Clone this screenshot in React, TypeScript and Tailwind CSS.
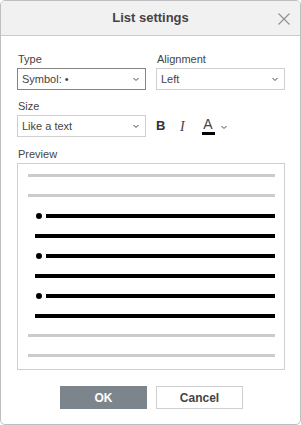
import { FC } from "react";

const Chevron: FC = () => (
  <svg width="6" height="5" viewBox="0 0 6 5" className="shrink-0">
    <path d="M0.5 1l2.5 2.5L5.5 1" fill="none" stroke="#444" strokeWidth="1" />
  </svg>
);

interface SelectProps {
  value: string;
  focused?: boolean;
}

const Select: FC<SelectProps> = ({ value, focused }) => (
  <div
    className={`flex h-[22px] items-center justify-between border bg-white pl-[4px] pr-[6px] text-[11px] text-[#444] ${
      focused ? "border-[#848484]" : "border-[#cfcfcf]"
    }`}
  >
    <span>{value}</span>
    <Chevron />
  </div>
);

const Label: FC<{ text: string }> = ({ text }) => (
  <div className="mb-[2px] h-[14px] pl-px text-[11px] leading-[14px] text-[#444]">
    {text}
  </div>
);

const GrayLine: FC = () => (
  <div className="h-[20px] pl-[10px] pr-[9px]">
    <div className="h-[3px] bg-[#cbcbcb]" />
  </div>
);

const TextLine: FC<{ bullet?: boolean }> = ({ bullet }) => (
  <div className="flex h-[20px] items-start pl-[17px] pr-[9px]">
    {bullet && (
      <div className="mr-[4px] ml-px mt-[-1px] h-[6px] w-[6px] shrink-0 rounded-full bg-black" />
    )}
    <div className="h-[4px] flex-1 bg-black" />
  </div>
);

export default function App() {
  return (
    <div
      className="flex h-[425px] w-[301px] flex-col overflow-hidden rounded-[5px] border border-[#bfbfbf] bg-white"
      style={{ fontFamily: '"Liberation Sans", Arial, sans-serif' }}
    >
      {/* Header */}
      <div className="relative flex h-[35px] shrink-0 items-center justify-center border-b border-[#cbcbcb] bg-[#f1f1f1]">
        <span className="text-[13px] font-bold text-[#444]">List settings</span>
        <svg
          width="12"
          height="12"
          viewBox="0 0 12 12"
          className="absolute right-[10px] top-[12px]"
        >
          <path d="M0.5 0.5l11 11M11.5 0.5l-11 11" stroke="#8f8f8f" strokeWidth="1.1" />
        </svg>
      </div>

      {/* Body */}
      <div className="flex flex-1 flex-col pl-[16px] pr-[15px] pt-[16px]">
        <div className="grid grid-cols-2 gap-[10px]">
          <div>
            <Label text="Type" />
            <Select value="Symbol: •" focused />
          </div>
          <div>
            <Label text="Alignment" />
            <Select value="Left" />
          </div>
        </div>

        <div className="mt-[9px] grid grid-cols-2 gap-[10px]">
          <div>
            <Label text="Size" />
            <Select value="Like a text" />
          </div>
          <div className="flex items-end">
            <div className="flex h-[22px] items-center text-[#444]">
              <span className="w-[23px] text-[13px] font-bold text-[#333]">B</span>
              <span
                className="w-[22px] pl-[1px] text-[14px] italic"
                style={{ fontFamily: '"Liberation Serif", serif' }}
              >
                I
              </span>
              <div className="flex w-[14px] flex-col items-center">
                <span className="text-[14px] leading-[14px]">A</span>
                <div className="mt-[1px] h-[3px] w-[13px] bg-black" />
              </div>
              <div className="ml-[6px] mt-[2px]">
                <Chevron />
              </div>
            </div>
          </div>
        </div>

        <div className="mt-[10px]">
          <Label text="Preview" />
          <div className="h-[207px] border border-[#cfcfcf] pt-[10px]">
            <GrayLine />
            <GrayLine />
            <TextLine bullet />
            <TextLine />
            <TextLine bullet />
            <TextLine />
            <TextLine bullet />
            <TextLine />
            <GrayLine />
            <GrayLine />
          </div>
        </div>

        <div className="mt-[16px] flex justify-center gap-[9px] pl-px">
          <button className="h-[23px] w-[87px] bg-[#7d858c] text-[12px] font-bold text-white">
            OK
          </button>
          <button className="h-[23px] w-[87px] border border-[#cfcfcf] bg-white text-[12px] font-bold text-[#444]">
            Cancel
          </button>
        </div>
      </div>
    </div>
  );
}
